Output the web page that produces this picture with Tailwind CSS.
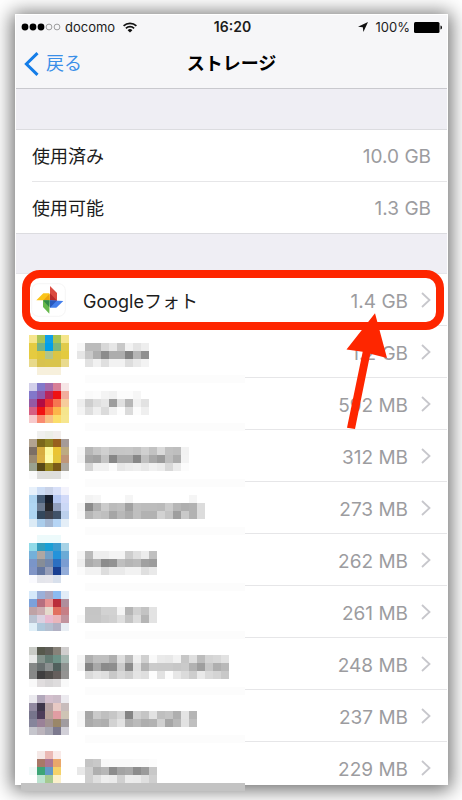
<!DOCTYPE html>
<html lang="ja">
<head>
<meta charset="utf-8">
<meta name="viewport" content="width=device-width, initial-scale=1">
<title>ストレージ</title>
<script src="https://cdn.jsdelivr.net/npm/@tailwindcss/browser@4"></script>
</head>
<body class="h-screen overflow-hidden bg-white pt-[14px] pr-[14px] pb-[15px] pl-[15px] font-['Inter','Noto_Sans_CJK_JP',sans-serif] text-[#1c1c1c]">
<div class="relative h-full shadow-[0_2px_18px_3px_rgba(0,0,0,0.58)]">
  <main class="h-full overflow-hidden border border-white bg-white">
    <header class="border-b border-[#c9c9ce] bg-[#f6f6f8]">
      <div class="grid h-6 grid-cols-[1fr_auto_1fr] items-center px-[5px] text-[13px] leading-4">
        <div class="flex items-center gap-1">
          <svg class="h-2 w-10" viewBox="0 0 40 8" aria-hidden="true">
            <g fill="#000"><circle cx="4" cy="4" r="3.4"/><circle cx="12" cy="4" r="3.4"/><circle cx="20" cy="4" r="3.4"/></g>
            <g fill="none" stroke="#777" stroke-width=".7"><circle cx="28" cy="4" r="2.9"/><circle cx="36" cy="4" r="2.9"/></g>
          </svg>
          <span>docomo</span>
          <svg class="ml-1 h-[11px] w-[14px]" viewBox="0 0 14 11" fill="none" stroke="#111" stroke-width="1.7" aria-hidden="true">
            <path d="M.6 3.9a9.2 9.2 0 0 1 12.8 0M2.9 6.3a5.9 5.9 0 0 1 8.2 0"/><path d="M7 10.6 4.6 8.2a3.5 3.5 0 0 1 4.8 0z" fill="#111" stroke="none"/>
          </svg>
        </div>
        <span class="pl-[2px] text-[14px] font-semibold">16:20</span>
        <div class="flex items-center justify-end gap-1">
          <svg class="mr-1 h-[10px] w-[10px]" viewBox="0 0 10 10" aria-hidden="true"><path d="M10 0 0 4.8l4.8.4L5.4 10z" fill="#111"/></svg>
          <span>100%</span>
          <svg class="h-[11px] w-7" viewBox="0 0 28 11" aria-hidden="true"><rect width="25.5" height="11" rx="1.5"/><path d="M26.5 3.5q1.5 0 1.5 2t-1.5 2z"/></svg>
        </div>
      </div>
      <nav class="grid h-[49px] grid-cols-[1fr_auto_1fr] items-center">
        <a href="#" class="flex items-center gap-[7px] pl-2 text-[18px] leading-6 text-[#3a8fe8]">
          <svg class="h-6 w-[15px]" viewBox="0 0 15 24" fill="none" stroke="#147de8" stroke-width="3" aria-hidden="true"><path d="M13.5 1.2 2.4 12l11.1 10.8"/></svg>
          <span>戻る</span>
        </a>
        <h1 class="text-[18px] leading-6 font-bold text-black">ストレージ</h1>
      </nav>
    </header>
    <section class="border-b border-[#e6e6ea] bg-[#efeef4] pt-10">
      <dl class="border-t border-[#dcdce0] bg-white text-[18px] leading-6">
        <div class="ml-4 flex h-[52px] items-center justify-between border-b border-[#e6e6e8] pt-[2px] pr-4"><dt>使用済み</dt><dd class="text-[19px] text-[#9c9ca0]">10.0 GB</dd></div>
        <div class="flex h-[52px] items-center justify-between border-b border-[#dcdce0] pt-[2px] pr-4 pl-4"><dt>使用可能</dt><dd class="text-[19px] text-[#9c9ca0]">1.3 GB</dd></div>
      </dl>
      <div class="h-[39px]"></div>
    </section>
    <ul id="apps" class="text-[18px] leading-6">
      <li class="relative">
        <a href="#" class="flex h-[51px] items-center pr-4 pl-[15px]">
          <svg class="h-[34px] w-[35px]" viewBox="90 66 105 102" aria-hidden="true">
            <rect x="92" y="68" width="101" height="98" rx="20" fill="#fff" stroke="#f0f0f0" stroke-width="2"/>
            <path d="M147 75 168 96v25l-21-3z" fill="#db4b40"/><path d="m147 97 21 22-21-1z" fill="#b82b2b"/>
            <path d="m106 118 21-21h18l2 21z" fill="#fbc51a"/><path d="m127 118 19-20v20z" fill="#eda20e"/>
            <path d="m187 120-21 20h-19v-22z" fill="#437fec"/><path d="m147 140 20-21-20-1z" fill="#2858bd"/>
            <path d="m145 158-19-20v-20h20z" fill="#66b84b"/><path d="m145 139-19-21h20z" fill="#318a45"/>
          </svg>
          <span class="ml-[17px] flex-1 pt-1">Googleフォト</span>
          <span class="pt-1 text-[19px] text-[#9c9ca0]">1.4 GB</span>
          <svg class="ml-[13px] h-4 w-[10px]" viewBox="0 0 10 16" fill="none" stroke="#c7c7cc" stroke-width="1.8" aria-hidden="true"><path d="m1 1 7.5 7L1 15"/></svg>
        </a>
        <div class="ml-[229px] h-px bg-[#e6e6e8]"></div>
        <div class="pointer-events-none absolute -top-1 right-[3px] -bottom-1 left-[6px] z-10 rounded-[18px] border-8 border-[#fe2600]"></div>
        <svg class="pointer-events-none absolute top-[39px] right-[59px] z-20 h-[118px] w-[42px]" viewBox="346 313 42 118" fill="#fe2600" aria-hidden="true"><path d="M375 313.3 387 358l-16.7-4.2L355 429l-8-1.3 15.7-75.9-16.2-2.4z"/></svg>
      </li>
    </ul>
  </main>
  <div class="absolute -bottom-[6px] left-[6px] h-2 w-56 bg-[#c3c3c3]"></div>
</div>

<template id="row">
  <li>
    <a href="#" class="flex h-[51px] items-center pr-4 pl-[13px]">
      <svg class="h-[51px] w-10 overflow-visible" data-icon shape-rendering="crispEdges" aria-hidden="true"></svg>
      <svg class="ml-2 h-[51px] w-[168px] overflow-visible" data-label shape-rendering="crispEdges" aria-hidden="true"></svg>
      <span class="flex-1 pt-1 text-right text-[19px] text-[#9c9ca0]" data-size></span>
      <svg class="ml-[13px] h-4 w-[10px]" viewBox="0 0 10 16" fill="none" stroke="#c7c7cc" stroke-width="1.8" aria-hidden="true"><path d="m1 1 7.5 7L1 15"/></svg>
    </a>
    <div class="ml-[229px] h-px bg-[#e6e6e8]"></div>
  </li>
</template>
<script>
// Each app: size, top of the icon tiles, icon colours by line, top of the label tiles, label greys by line.
// "." leaves a tile empty; a tile is 8 units wide.
const apps = [
 ["1.2 GB", 9, "F6E58D A9C456 0F9FE8 A8C352 F5E58B|E4CB41 73B288 00A0E9 7DB57C E0CB4B|E5CB40 DFC63A B3C488 DCC543 E3CA3F|E8D98A D8C24E D9C44C D9C44C E9DA8E|. F7F0DC F7F0DC F7F0DC .",
  17, "F7 BB BB D8 E6 C8 F2 E4 EE|E6 C8 AE 8C AD AD 82 B5 90|. E2 F1 DF F2 F2 DD EA F3"],
 ["592 MB", 5, "D2CFEA 8279CA A36AAB D87F97 F6E6E6|8277CA 8D59AB B9265B EF1212 F1AD9D|945AA3 B10C43 EB302F F67651 F6CC9C|D65F82 F01313 FA6E3E FCB54A F5E58D|F7C9CB F98A70 F7C084 FBDE6B F6E690",
  13, ". FA FC F4 F1 FC FC F6 .|EE CE DE E6 9D E0 B6 F1 E2|F4 DE EF DB F1 FD DB FC EF"],
 ["312 MB", 1, ". F0F0EE ECEEE7 F2EEEC .|B2A390 7B671A 8F8222 98601E A59B98|7C6F65 D7AC40 FDFAA1 EAC434 BDAB82|9A8A72 DAAF43 FFFCAC E4C53B BF9679|9AA18F 574817 978721 795A18 ACA8A0|FAFAFA DEDEDC DEDEDA DEDEDC FAFAFA",
  17, "F6 B7 C6 D0 C5 C6 C7 C2 D0 C2 DA C1 BE F2|F3 A7 A2 C3 87 AA AA 87 BF A8 9B BE AC F3|. D5 F1 F1 FB E7 EC EF E8 F1 EC D8 EC FC"],
 ["273 MB", 5, "E8F1FB CDDDF5 C8D2E8 D8E0F8 F3F3FC|ADD3F0 455B75 171E2C B5C8F2 D2DAF8|B0D6F3 6C7B91 242529 909EBC CBD8F6|AED5F2 33475C 3E424E 405269 BCD0EC|DCEBF6 ABCDEB A4B7D2 B6D5F5 E4EEF7",
  13, ". F3 F6 . . . F5 . . . . . . . F5 .|F5 8B AF CB BB BF A1 BF BC BC BA CB B6 AF B2 DC|F8 B6 C4 BF A6 B8 AC BF B2 B2 D2 C4 9E C9 B2 DC"],
 ["262 MB", 1, ". EDFAFB EDFAFB EDFAFB .|91DAE8 339DBD 1B9FD5 3D9CD0 A6D2E6|74B0D9 AFA7A2 719FC6 2493DA 6CABD6|7A95C8 868D97 7487AA 2B6FC1 7B9DD2|8095C6 6477A1 969EB8 193F91 93ACD8|FAFAFE E4E5EB E6E6EC D8E0EC .",
  17, "F5 BA EE EE F4 F4 CD DF ED C0|EE AB B5 8C 92 BF B5 BA A0 9C|FB F2 F2 DD EA EA F2 F2 DF E9"],
 ["261 MB", 5, "D6E9FA 9BB0D9 ABA6BF 8CBBF0 E2ECF7|7BA1DA B66F7F E89291 BA2D3A AF8E9C|BFA3A6 CDADB1 E5DACC E27060 C67F86|BAC3D2 DBD1E1 E9BAD0 EAB5BA C2949E|E0EFF8 AFC8DB B4BFD0 B1B0C3 E8EEF4",
  21, ". C5 C5 D2 D2 F5 B5 D0 C3 E3|F9 C6 C6 CC D0 DF C4 DC B5 E3"],
 ["248 MB", 9, "C9CBC6 57594D 605F59 878279 D0CECE|E8E9E8 84928C 647C74 6D9287 A3B5AF|858887 697070 8B9090 50605D 8F9391|878888 3F3E3F 504D4B 655E5C 949392|F9F9F9 E0DDDE D8D6D7 DEDCDD F9F9F9",
  17, "F5 AF BF BF AF DE BB F0 D0 F9 EA E8 F2 C7 DF BC D4 D8 E2|F1 84 A8 8B 8E CB 8C DF B3 CB CA CA C7 CA B2 9E C7 AF B9|. DA E4 DF C8 D8 CF E4 DF FD E2 FC E7 DB CD E9 DA D4 C8"],
 ["237 MB", 5, "EBEAEF B2A8BB D3BFCD CCBCC8 ECEAEF|9189A0 3E374B B6A2A3 E7C9C4 C8BCBC|77758C 4D3D5A B9A29A E19DA3 CEC4B5|86859B 9A8198 A19191 9A8769 A19CA0|C5C5CC BBB4BC A6A5B1 7C798E D1CFD7",
  21, "F6 A6 CA BF C7 D6 84 D0 C5 E2 BF C4 AF E4 B5|F7 AA B2 AE D2 E2 B0 BA AE B2 D0 A6 B8 E2 BF"],
 ["229 MB", 9, ". F5E8E6 EBB9B4 F9EAE8 .|. A97868 AC7793 EAA76A .|F2FAF8 3DA576 629AC7 F5D269 .|. BCE3D0 A5CA91 FBF0CB .",
  17, ". C4 C9 F8 F9 F9 F9 FA FA FC|E8 CF AF B7 8C A3 A8 8C 9B C8|. CF DF EE EB D0 EC EB DF CF"]
];
const tiles = (top, lines) => lines.split("|").map((line, y) => line.split(" ").map((c, x) =>
  c === "." ? "" : `<rect x="${x * 8}" y="${top + y * 8}" width="8" height="8" fill="#${c.length === 2 ? c + c + c : c}"/>`).join("")).join("");
const list = document.getElementById("apps");
const template = document.getElementById("row");
apps.forEach(([size, iconTop, icon, labelTop, label], i) => {
  const row = template.content.cloneNode(true);
  row.querySelector("[data-icon]").innerHTML = tiles(iconTop, icon);
  row.querySelector("[data-label]").innerHTML = `<rect x="8" y="${i % 2 ? 45 : 49}" width="160" height="8" fill="#fcfcfc"/>` + tiles(labelTop, label);
  row.querySelector("[data-size]").textContent = size;
  list.append(row);
});
</script>
</body>
</html>
